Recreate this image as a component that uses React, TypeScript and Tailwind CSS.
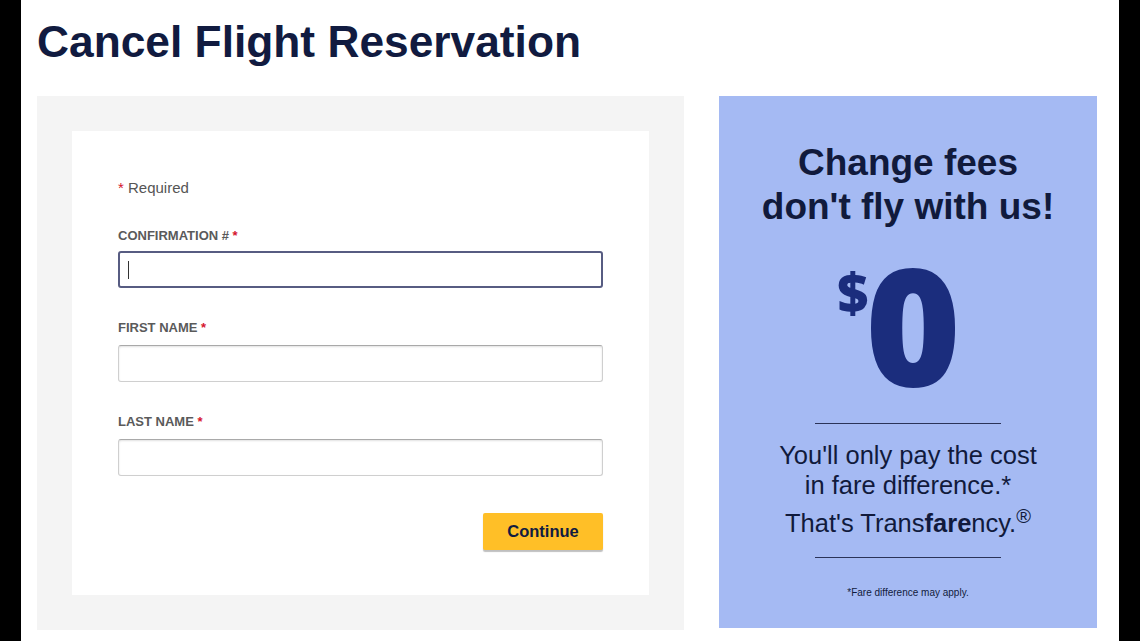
import React from "react";

const sans = { fontFamily: '"Liberation Sans", Arial, sans-serif' };

function Field({ label, focused, first }: { label: string; focused?: boolean; first?: boolean }) {
  return (
    <div className="flex flex-col">
      <label
        className={
          (first ? "mt-[2px] " : "") +
          "text-[13px] leading-[16px] font-bold text-[#5a5a5a] uppercase"
        }
      >
        {label} <span className="text-[#d5152e]">*</span>
      </label>
      <div
        className={
          focused
            ? "mt-[7px] h-[37px] rounded-[3px] border-2 border-[#575c82] bg-white flex items-center pl-[8px]"
            : "mt-[9px] h-[37px] rounded-[3px] border border-[#cfcfcf] border-t-[#a9a9a9] bg-white shadow-[inset_0_1px_2px_rgba(0,0,0,0.12)]"
        }
      >
        {focused && <div className="w-px h-[18px] bg-[#333]" />}
      </div>
    </div>
  );
}

export default function App() {
  return (
    <div className="bg-black h-[641px] w-[1140px] overflow-hidden" style={sans}>
      <div className="ml-[21px] w-[1098px] h-[641px] bg-white pl-[16px] pt-[20px]">
        <h1 className="text-[44.3px] leading-[44px] font-bold text-[#111b40]">
          Cancel Flight Reservation
        </h1>

        <div className="mt-[32px] flex gap-[35px] items-start">
          {/* form panel */}
          <div className="w-[647px] h-[534px] bg-[#f4f4f4] p-[35px]">
            <div className="bg-white h-[464px] px-[46px] pt-[48px]">
              <p className="text-[15px] leading-[18px] text-[#555]">
                <span className="text-[#d5152e]">*</span> Required
              </p>
              <div className="mt-[29px] flex flex-col gap-[32px]">
                <Field label="Confirmation #" focused first />
                <Field label="First Name" />
                <Field label="Last Name" />
              </div>
              <div className="flex justify-end mt-[37px]">
                <button className="w-[120px] h-[37px] bg-[#ffbf27] rounded-[2px] text-[16.5px] font-bold text-[#111b40] shadow-[0_2px_1px_rgba(0,0,0,0.25)]">
                  Continue
                </button>
              </div>
            </div>
          </div>

          {/* promo panel */}
          <div className="w-[378px] h-[532px] bg-[#a5baf3] flex flex-col items-center pt-[45px] text-[#111a3c]">
            <h2 className="text-[37px] leading-[44px] font-bold text-center">
              Change fees
              <br />
              don't fly with us!
            </h2>
            <div
              className="mt-[14px] pr-[18px] flex items-start text-[#1b2d7d] font-extrabold h-[160px]"
              style={{ fontFamily: '"Open Sans", "Liberation Sans", sans-serif' }}
            >
              <span className="text-[54px] leading-[54px] mt-[22px] -mr-[3px]">$</span>
              <span className="text-[163px] leading-[160px]">0</span>
            </div>
            <div className="mt-[20px] w-[186px] h-px bg-[#2b3358]" />
            <p className="mt-[16px] text-[25.5px] leading-[30px] text-center">
              You'll only pay the cost
              <br />
              in fare difference.*
            </p>
            <p className="mt-[8px] text-[25.5px] leading-[30px] text-center">
              That's Trans<span className="font-bold">fare</span>ncy.
              <sup className="text-[20px] relative -top-[9px]">®</sup>
            </p>
            <div className="mt-[19px] w-[186px] h-px bg-[#2b3358]" />
            <p className="mt-[29px] text-[10px] leading-[12px]">*Fare difference may apply.</p>
          </div>
        </div>
      </div>
    </div>
  );
}
